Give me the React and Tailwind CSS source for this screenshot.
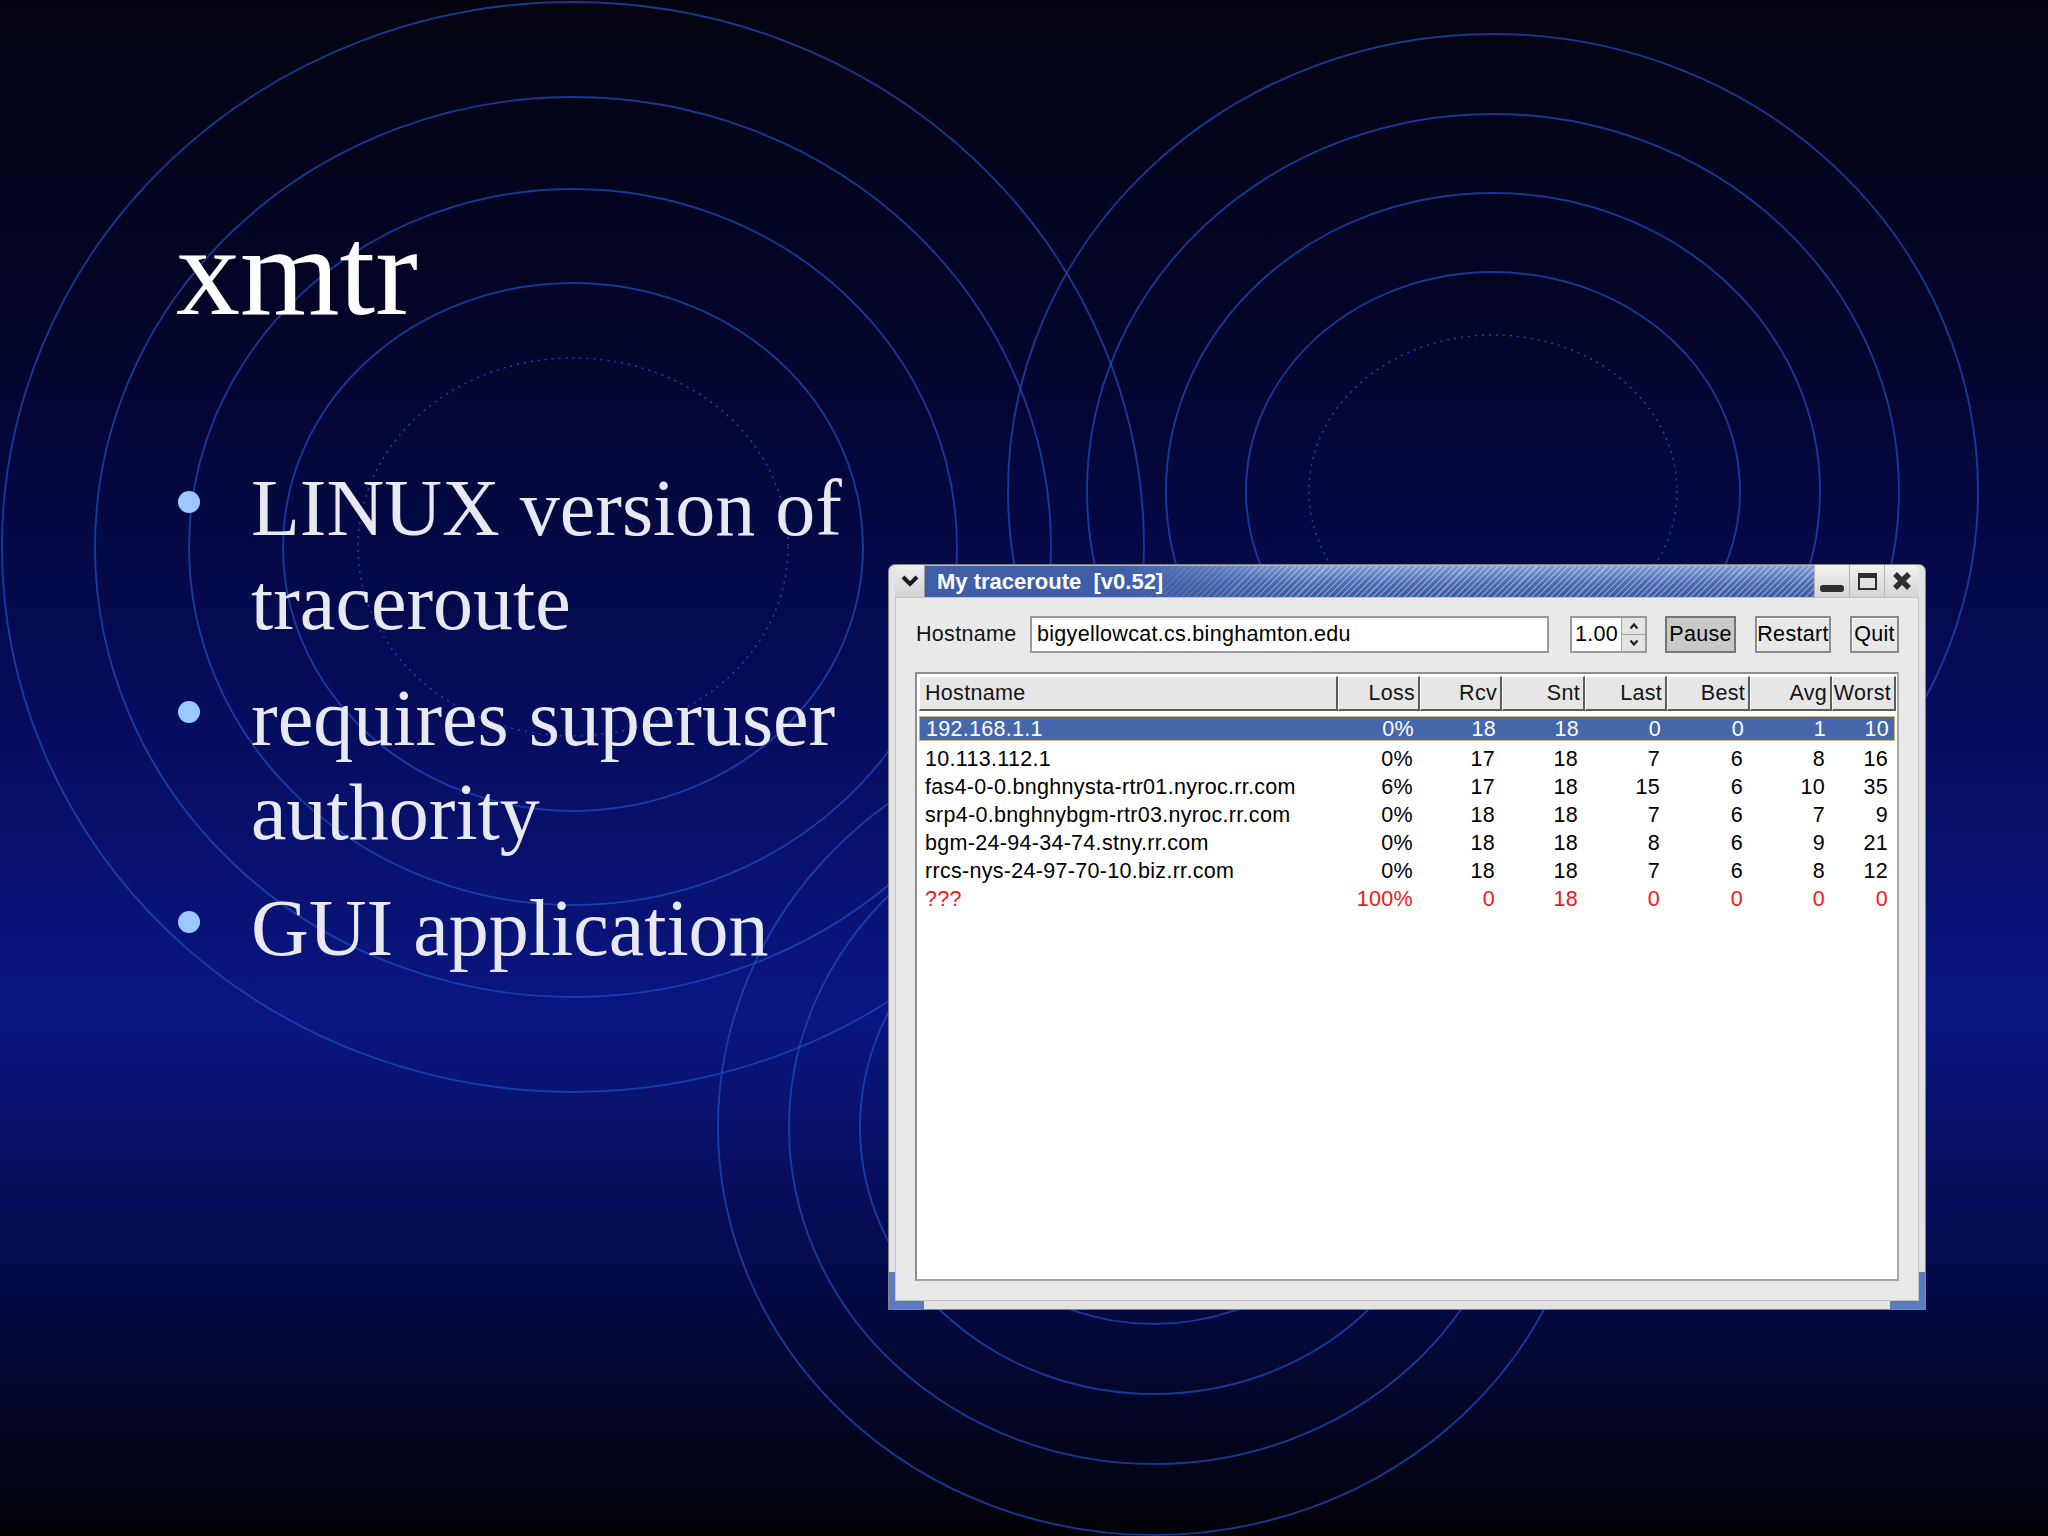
import React from "react";

const cols = ["Loss", "Rcv", "Snt", "Last", "Best", "Avg", "Worst"];

const rows = [
  { host: "192.168.1.1", v: ["0%", "18", "18", "0", "0", "1", "10"], sel: true },
  { host: "10.113.112.1", v: ["0%", "17", "18", "7", "6", "8", "16"] },
  { host: "fas4-0-0.bnghnysta-rtr01.nyroc.rr.com", v: ["6%", "17", "18", "15", "6", "10", "35"] },
  { host: "srp4-0.bnghnybgm-rtr03.nyroc.rr.com", v: ["0%", "18", "18", "7", "6", "7", "9"] },
  { host: "bgm-24-94-34-74.stny.rr.com", v: ["0%", "18", "18", "8", "6", "9", "21"] },
  { host: "rrcs-nys-24-97-70-10.biz.rr.com", v: ["0%", "18", "18", "7", "6", "8", "12"] },
  { host: "???", v: ["100%", "0", "18", "0", "0", "0", "0"], red: true },
];

// ring groups of the slide background: [cx, cy, [[rx, ry], ...], dotted]
const rings = [
  [573, 547, [[571, 545], [478, 450], [384, 358], [290, 264]], [215, 189]],
  [1493, 491, [[485, 457], [406, 377], [327, 298], [247, 219]], [184, 156]],
  [1154, 1127, [[436, 408], [365, 337], [294, 267], [222, 197]], [150, 125]],
];

function Background() {
  return (
    <svg className="absolute inset-0" width="2048" height="1536" viewBox="0 0 2048 1536" fill="none">
      {rings.map(([cx, cy, solid, dot], i) => (
        <g key={i}>
          {solid.map(([rx, ry], j) => (
            <ellipse key={j} cx={cx} cy={cy} rx={rx} ry={ry} stroke="#1f4cc0" strokeWidth="1.9" opacity="0.72" />
          ))}
          <ellipse cx={cx} cy={cy} rx={dot[0]} ry={dot[1]} stroke="#2c5cd0" strokeWidth="1.5" strokeDasharray="2 5" opacity="0.7" />
        </g>
      ))}
    </svg>
  );
}

function Bullet({ children }) {
  return (
    <div className="flex items-start">
      <div className="mt-[30px] h-[22px] w-[22px] shrink-0 rounded-full bg-[#9cc8ff]" />
      <div className="ml-[51px] w-[620px] text-[80px] leading-[94px] text-[#e8e8f0]">{children}</div>
    </div>
  );
}

function TitleButton({ children, last }) {
  return (
    <div
      className={
        "flex w-[35px] items-center justify-center border-l border-[#b4b4b4] bg-[linear-gradient(to_bottom,#f2f2f2,#d4d4d4)] " +
        (last ? "rounded-tr-[6px]" : "")
      }
    >
      {children}
    </div>
  );
}

function Button({ children, pressed, w }) {
  return (
    <div
      className={
        "flex h-[37px] items-center justify-center border-2 " +
        w +
        (pressed
          ? " border-[#767676] bg-[#c9c9c9]"
          : " border-[#8a8a8a] bg-[#e8e8e8] shadow-[inset_1px_1px_0_#ffffff]")
      }
    >
      {children}
    </div>
  );
}

function Window() {
  return (
    <div className="absolute left-[888px] top-[564px] flex h-[746px] w-[1038px] flex-col rounded-t-[7px] border border-[#858585] bg-[#e3e3e3] px-[6px] pb-[8px] font-['Liberation_Sans',Arial,sans-serif] text-[21.5px] tracking-[0.3px] text-black">
      {/* title bar */}
      <div className="flex h-[32px] shrink-0">
        <div className="flex w-[30px] items-center justify-center rounded-tl-[6px] border-r border-[#9c9c9c] bg-[linear-gradient(to_bottom,#eeeeee,#d2d2d2)]">
          <svg width="20" height="14" viewBox="0 0 20 14">
            <path d="M3 3 L10 10 L17 3" stroke="#1a1a1a" strokeWidth="4" fill="none" />
          </svg>
        </div>
        <div className="flex flex-1 items-center border-t border-[#9fb4e0] bg-[linear-gradient(to_right,#3e5fa8_0%,#3e5fa8_22%,rgba(62,95,168,0)_42%),repeating-linear-gradient(135deg,rgba(255,255,255,0.32)_0px,rgba(255,255,255,0.32)_1.5px,rgba(255,255,255,0)_1.5px,rgba(255,255,255,0)_4.5px),linear-gradient(to_bottom,#7f9bd3,#4d6db2_55%,#3a5aa2)] pl-[12px]">
          <span className="whitespace-pre text-[22px] font-bold tracking-normal text-white">My traceroute  [v0.52]</span>
        </div>
        <TitleButton>
          <div className="mt-[14px] h-[7px] w-[24px] rounded-[3px] bg-[#2e2e2e]" />
        </TitleButton>
        <TitleButton>
          <div className="h-[17px] w-[19px] border-2 border-t-[5px] border-[#2e2e2e]" />
        </TitleButton>
        <TitleButton last>
          <svg width="20" height="20" viewBox="0 0 20 20">
            <path d="M3 3 L17 17 M17 3 L3 17" stroke="#2e2e2e" strokeWidth="5.5" />
          </svg>
        </TitleButton>
      </div>

      {/* body */}
      <div className="flex flex-1 flex-col border border-[#c2c2c2] bg-[#e9e9e9] px-[19px] pb-[19px] pt-[18px]">
        <div className="flex h-[37px] items-center">
          <div className="w-[115px] pl-[1px] text-[#111]">Hostname</div>
          <div className="flex h-[37px] w-[519px] items-center border-2 border-[#9a9a9a] bg-white pl-[5px]">
            bigyellowcat.cs.binghamton.edu
          </div>
          <div className="ml-[21px] flex h-[37px] w-[77px] border-2 border-[#9a9a9a] bg-white">
            <div className="flex flex-1 items-center pl-[3px]">1.00</div>
            <div className="flex w-[24px] flex-col border-l border-[#a8a8a8] bg-[#e4e4e4]">
              <div className="flex flex-1 items-center justify-center border-b border-[#a8a8a8]">
                <svg width="10" height="8" viewBox="0 0 10 8">
                  <path d="M1.5 6.5 L5 2.5 L8.5 6.5" stroke="#222" strokeWidth="2.2" fill="none" />
                </svg>
              </div>
              <div className="flex flex-1 items-center justify-center">
                <svg width="10" height="8" viewBox="0 0 10 8">
                  <path d="M1.5 1.5 L5 5.5 L8.5 1.5" stroke="#222" strokeWidth="2.2" fill="none" />
                </svg>
              </div>
            </div>
          </div>
          <div className="ml-[18px]">
            <Button pressed w="w-[71px]">Pause</Button>
          </div>
          <div className="ml-[19px]">
            <Button w="w-[76px]">Restart</Button>
          </div>
          <div className="ml-[19px]">
            <Button w="w-[49px]">Quit</Button>
          </div>
        </div>

        {/* table */}
        <div className="mt-[19px] flex-1 border-2 border-[#8e8e8e] border-b-[#a6a6a6] border-r-[#a6a6a6] bg-white p-[2px]">
          <div className="grid grid-cols-[419px_82px_82px_83px_82px_83px_82px_64px]">
            <div className="flex h-[35px] items-center border-b-2 border-l border-r-2 border-t border-b-[#5c5c5c] border-l-white border-r-[#5c5c5c] border-t-white bg-[#e6e6e6] pl-[5px] text-[#141414]">
              Hostname
            </div>
            {cols.map((c) => (
              <div
                key={c}
                className="flex h-[35px] items-center justify-end border-b-2 border-l border-r-2 border-t border-b-[#5c5c5c] border-l-white border-r-[#5c5c5c] border-t-white bg-[#e6e6e6] pr-[3px] text-[#141414]"
              >
                {c}
              </div>
            ))}
          </div>
          <div className="mt-[5px]">
            {rows.map((r) => (
              <div
                key={r.host}
                className={
                  "grid grid-cols-[419px_82px_82px_83px_82px_83px_82px_64px] items-center " +
                  (r.sel
                    ? "mb-[2px] h-[25px] border border-[#cdb47c] bg-[#4767ab] leading-[22px] text-white"
                    : "h-[28px] " + (r.red ? "text-[#ee1818]" : "text-black"))
                }
              >
                <div className="pl-[6px]">{r.host}</div>
                {r.v.map((x, i) => (
                  <div key={i} className={"text-right " + (i === 6 ? "pr-[8px]" : "pr-[7px]")}>
                    {x}
                  </div>
                ))}
              </div>
            ))}
          </div>
        </div>
      </div>

      {/* resize corners */}
      <div className="absolute bottom-0 left-0 h-[8px] w-[35px] bg-[#5a7bc0]" />
      <div className="absolute bottom-0 left-0 h-[37px] w-[6px] bg-[#5a7bc0]" />
      <div className="absolute bottom-0 right-0 h-[8px] w-[35px] bg-[#5a7bc0]" />
      <div className="absolute bottom-0 right-0 h-[37px] w-[6px] bg-[#5a7bc0]" />
    </div>
  );
}

export default function App() {
  return (
    <div className="relative h-[1536px] w-[2048px] overflow-hidden bg-[linear-gradient(to_bottom,#040410_0%,#03052a_22%,#060c5a_45%,#0a1682_66%,#050b4c_82%,#020207_100%)] font-['Liberation_Serif','Times_New_Roman',serif]">
      <Background />

      <div className="relative pl-[176px] pt-[207px]">
        <h1 className="text-[128px] font-normal leading-[128px] text-white">xmtr</h1>
        <div className="mt-[126px] flex flex-col gap-[22px] pl-[2px]">
          <Bullet>LINUX version of traceroute</Bullet>
          <Bullet>requires superuser authority</Bullet>
          <Bullet>GUI application</Bullet>
        </div>
      </div>

      <Window />
    </div>
  );
}
